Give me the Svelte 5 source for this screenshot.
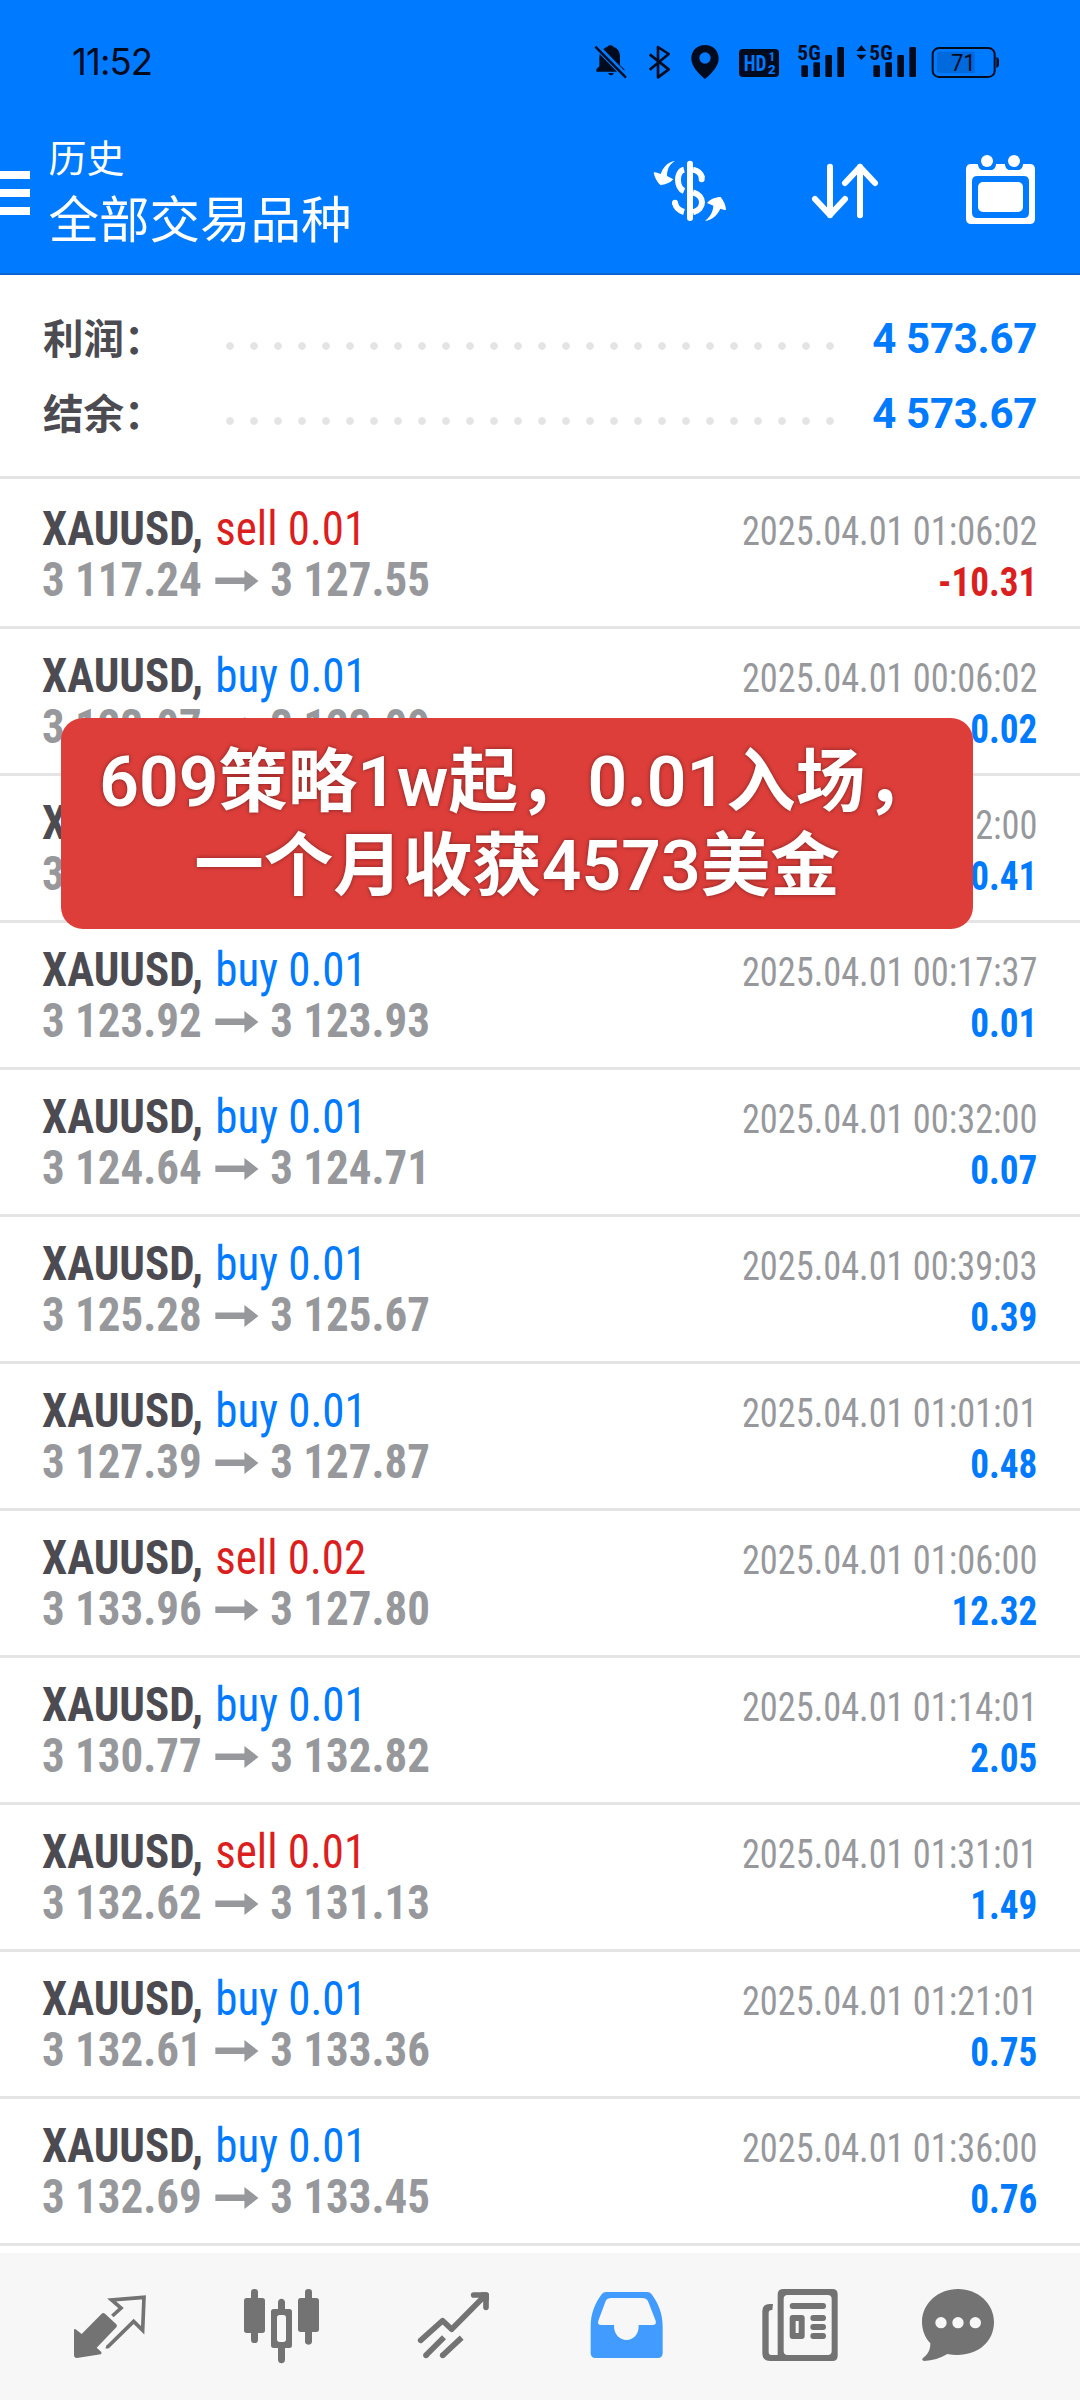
<script lang="ts">
  type Deal = {
    side: "buy" | "sell";
    volume: string;
    open: string;
    close: string;
    time: string;
    profit: string;
  };

  const summary = [
    { label: "利润：", value: "4 573.67" },
    { label: "结余：", value: "4 573.67" },
  ];

  const deals: Deal[] = [
    { side: "sell", volume: "0.01", open: "3 117.24", close: "3 127.55", time: "2025.04.01 01:06:02", profit: "-10.31" },
    { side: "buy", volume: "0.01", open: "3 123.07", close: "3 123.09", time: "2025.04.01 00:06:02", profit: "0.02" },
    { side: "buy", volume: "0.01", open: "3 123.50", close: "3 123.91", time: "2025.04.01 00:12:00", profit: "0.41" },
    { side: "buy", volume: "0.01", open: "3 123.92", close: "3 123.93", time: "2025.04.01 00:17:37", profit: "0.01" },
    { side: "buy", volume: "0.01", open: "3 124.64", close: "3 124.71", time: "2025.04.01 00:32:00", profit: "0.07" },
    { side: "buy", volume: "0.01", open: "3 125.28", close: "3 125.67", time: "2025.04.01 00:39:03", profit: "0.39" },
    { side: "buy", volume: "0.01", open: "3 127.39", close: "3 127.87", time: "2025.04.01 01:01:01", profit: "0.48" },
    { side: "sell", volume: "0.02", open: "3 133.96", close: "3 127.80", time: "2025.04.01 01:06:00", profit: "12.32" },
    { side: "buy", volume: "0.01", open: "3 130.77", close: "3 132.82", time: "2025.04.01 01:14:01", profit: "2.05" },
    { side: "sell", volume: "0.01", open: "3 132.62", close: "3 131.13", time: "2025.04.01 01:31:01", profit: "1.49" },
    { side: "buy", volume: "0.01", open: "3 132.61", close: "3 133.36", time: "2025.04.01 01:21:01", profit: "0.75" },
    { side: "buy", volume: "0.01", open: "3 132.69", close: "3 133.45", time: "2025.04.01 01:36:00", profit: "0.76" },
  ];
</script>

<div class="screen">
  <header>
    <div class="status">
      <span class="clock">11:52</span>
      <div class="status-icons">
        <svg class="bell" viewBox="102 69 102 114">
          <path d="M109 155v-7l9-9v-25c0-17 10-29 24-33 1-7 17-7 19 0 12 4 19 14 19 29v26l13 12v7z" />
          <path d="M145 159h16c-1 9-15 9-16 0z" />
          <path d="M107 77l93 95" stroke="#007aff" stroke-width="18" fill="none" />
          <path d="M106 80l92 93" stroke="#000c1e" stroke-width="7" fill="none" />
        </svg>
        <svg class="bt" viewBox="264 69 69 114">
          <path d="M269 103l57 45-32 24V81l32 21-57 47" fill="none" stroke="#000c1e" stroke-width="8" stroke-linejoin="round" />
        </svg>
        <svg class="pin" viewBox="390 69 90 114">
          <path fill-rule="evenodd" d="M435 75c24 0 41 17 41 41 0 22-22 45-41 61-19-16-41-39-41-61 0-24 17-41 41-41zm0 22a17 17 0 1 0 0 34 17 17 0 0 0 0-34z" />
        </svg>
        <svg class="hd" viewBox="534 69 126 114">
          <rect x="537" y="87" width="120" height="84" rx="12" />
          <text x="551" y="152" font-size="65" textLength="68" lengthAdjust="spacingAndGlyphs">HD</text>
          <text x="626" y="123" font-size="36" textLength="19" lengthAdjust="spacingAndGlyphs">1</text>
          <text x="623" y="161" font-size="40" textLength="24" lengthAdjust="spacingAndGlyphs">2</text>
        </svg>
        <svg class="sig1" viewBox="711 69 144 114">
          <text x="712" y="119" font-size="58" textLength="70" lengthAdjust="spacingAndGlyphs">5G</text>
          <rect x="724" y="136" width="20" height="35" rx="4" />
          <rect x="760" y="127" width="20" height="44" rx="4" />
          <rect x="796" y="105" width="20" height="66" rx="4" />
          <rect x="832" y="81" width="20" height="90" rx="4" />
        </svg>
        <svg class="sig2" viewBox="885 69 186 114">
          <path d="M889 93l15-17 15 17zM889 104h30l-15 16z" />
          <text x="928" y="119" font-size="58" textLength="70" lengthAdjust="spacingAndGlyphs">5G</text>
          <rect x="940" y="136" width="20" height="35" rx="4" />
          <rect x="976" y="127" width="20" height="44" rx="4" />
          <rect x="1012" y="105" width="20" height="66" rx="4" />
          <rect x="1048" y="81" width="20" height="90" rx="4" />
        </svg>
        <svg class="battery" viewBox="1113 69 207 114">
          <rect x="1118" y="84" width="186" height="87" rx="19" fill="none" stroke="#000c1e" stroke-width="6" />
          <path d="M1140 95h104v64h-104q-9 0-9-9v-46q0-9 9-9z" fill="#0069dc" />
          <path d="M1309 111q8 2 8 8v16q0 6-8 9z" />
          <text x="1173" y="153" font-size="72" textLength="74" lengthAdjust="spacingAndGlyphs">71</text>
        </svg>
      </div>
    </div>

    <div class="toolbar">
      <div class="menu"><i></i><i></i><i></i></div>
      <div class="titles">
        <span class="sub">历史</span>
        <span class="title">全部交易品种</span>
      </div>
      <div class="actions">
        <svg viewBox="270 390 240 240">
          <path d="M390 431v163" stroke-width="18" stroke-linecap="round" />
          <path d="M372 449c-24 6-24 54 0 64M345 548c2 14 13 24 27 28M399 449c14 3 24 10 27 24M399 517c36 10 36 50 0 60" stroke-width="18" />
          <path d="M345 548v1M425 472v6" stroke-width="18" stroke-linecap="round" />
          <path fill="#fff" stroke="none" d="M345 423c-16 10-24 24-24 45l19 10c-10 11-23 16-39 17-10-10-17-22-20-37 4-3 8 0 21 4 6-18 21-37 43-39zM435 603c14-12 24-26 25-46l-19-8c9-11 26-18 41-18 9 12 15 23 16 38-4 3-8-1-17-3-8 18-23 33-46 37z" />
        </svg>
        <svg viewBox="738 390 240 240">
          <path d="M813 440v146M768 537l45 48 45-48M903 586V440M858 489l45-48 45 48" stroke-width="18" stroke-linecap="round" stroke-linejoin="round" />
        </svg>
        <svg viewBox="1200 390 240 240">
          <g fill="#fff" stroke="none">
            <circle cx="1281" cy="423" r="18" />
            <circle cx="1362" cy="423" r="18" />
            <path fill-rule="evenodd" d="M1234 432h20c0 10 6 18 15 18h24c9 0 15-8 15-18h27c0 10 6 18 15 18h24c9 0 15-8 15-18h20q16 0 16 16v148q0 16-16 16h-175q-16 0-16-16V448q0-16 16-16zm18 36q-16 0-16 16v94q0 16 16 16h139q16 0 16-16v-94q0-16-16-16z" />
            <rect x="1254" y="486" width="135" height="90" rx="15" />
          </g>
        </svg>
      </div>
    </div>
  </header>

  <section class="summary">
    {#each summary as s}
      <div class="sum-row">
        <span class="sum-label">{s.label}</span>
        <span class="dots"></span>
        <span class="sum-value">{s.value}</span>
      </div>
    {/each}
  </section>

  <main>
    {#each deals as d}
      <div class="deal">
        <div class="left">
          <div class="line"><b>XAUUSD,</b> <span class="side {d.side}">{d.side} {d.volume}</span></div>
          <div class="line prices">
            <span>{d.open}</span>
            <svg viewBox="0 0 43 22" preserveAspectRatio="none"><path d="M0 7.5h29V0l14 11-14 11v-8H0z" /></svg>
            <span>{d.close}</span>
          </div>
        </div>
        <div class="right">
          <div class="time">{d.time}</div>
          <div class="profit" class:loss={d.profit.startsWith("-")}>{d.profit}</div>
        </div>
      </div>
    {/each}
  </main>

  <nav>
    <svg viewBox="30 48 240 240">
      <path d="M42 179q1-4 5-1l18 14 60-61q5-4 10 0l34 32q4 5 0 9l-59 61 14 13q2 5-2 7l-71 11q-9 0-9-9z" />
      <path d="M157 138l26-24-28-24 97-8-4 99-27-27-76 75q-4 2-7 1" fill="none" stroke="#737373" stroke-width="11" />
    </svg>
    <svg viewBox="546 48 240 240">
      <rect x="552" y="84" width="63" height="105" rx="8" />
      <rect x="573" y="57" width="21" height="162" rx="10" />
      <rect x="714" y="84" width="63" height="102" rx="8" />
      <rect x="735" y="57" width="21" height="167" rx="10" />
      <path fill-rule="evenodd" d="M641 117h13V97c0-14 21-14 21 0v20h13q8 0 8 8v101q0 8-8 8h-13v35c0 14-21 14-21 0v-35h-13q-8 0-8-8V125q0-8 8-8zm18 18q-8 0-8 8v65q0 8 8 8h11q8 0 8-8v-65q0-8-8-8z" />
    </svg>
    <svg viewBox="1062 48 240 240">
      <g fill="none" stroke="#737373" stroke-width="17" stroke-linejoin="round">
        <path d="M1082 211l66-59 27 26 98-99M1241 75h37v37" stroke-linecap="round" />
        <path d="M1152 202l-54 54M1205 203l-57 53" />
      </g>
      <circle cx="1098" cy="256" r="8.5" />
      <circle cx="1148" cy="256" r="8.5" />
      <path d="M1262 67h17q8 0 8 8v18z" />
    </svg>
    <svg class="active" viewBox="51 48 240 240">
      <path fill-rule="evenodd" d="M109 66h122q9 0 14 7c20 27 33 58 33 97v79q0 15-15 15H77q-15 0-15-15v-79c0-39 13-70 33-97q5-7 14-7zm15 18q-13 0-17 9L85 152q-4 13 9 13h38c-2 59 77 60 74 0h42q12 0 9-13l-22-56q-4-12-19-12z" />
    </svg>
    <svg viewBox="570 48 240 240">
      <path fill-rule="evenodd" d="M641 57h146q16 0 16 16v184q0 16-16 16H600q-23 0-23-23V124q0-22 22-22h10l-2 18q-11-1-11 9v117q0 9 8 9h19V73q0-16 18-16zm12 18q-12 0-12 12v156q0 12 12 12h120q12 0 12-12V87q0-12-12-12z" />
      <rect x="659" y="99" width="109" height="18" rx="9" />
      <path fill-rule="evenodd" d="M668 135h27q9 0 9 9v54q0 9-9 9h-27q-9 0-9-9v-54q0-9 9-9zm9 18v36h9v-36z" />
      <rect x="721" y="135" width="47" height="18" rx="9" />
      <rect x="721" y="162" width="47" height="18" rx="9" />
      <rect x="721" y="189" width="47" height="18" rx="9" />
    </svg>
    <svg viewBox="1044 48 240 240">
      <path d="M1164 57c60 0 108 44 108 99 0 68-62 110-140 96-20 13-45 20-69 21q-10-2-4-9c16-12 22-24 22-44-17-19-25-40-25-64 0-55 48-99 108-99z" />
      <g fill="#f7f7f7">
        <circle cx="1113" cy="158" r="17" />
        <circle cx="1164" cy="158" r="17" />
        <circle cx="1216" cy="158" r="17" />
      </g>
    </svg>
  </nav>

  <div class="banner">609策略1w起，0.01入场，<br />一个月收获4573美金</div>
</div>

<style>
  :global(body) { background: #fff; }
  .screen {
    position: relative; width: 1080px; height: 2400px; overflow: hidden;
    display: flex; flex-direction: column; background: #fff;
    font-family: "Roboto", "Noto Sans CJK SC", sans-serif;
  }
  svg { display: block; flex-shrink: 0; overflow: visible; }

  header {
    height: 275px; box-sizing: border-box; color: #fff;
    background: #007aff; border-bottom: 2px solid #0a66cc;
  }
  .status { display: flex; justify-content: space-between; height: 125px; padding: 0 80px 0 72px; }
  .clock {
    font-family: "Inter", sans-serif; font-size: 36.5px; line-height: 44px;
    letter-spacing: -0.9px; color: #000c1e; margin-top: 40px;
  }
  .status-icons { display: flex; margin-top: 43px; }
  .status-icons svg { height: 38px; fill: #000c1e; }
  .status-icons text { font-family: "Roboto Condensed", "Roboto", sans-serif; font-weight: 700; }
  .bell { width: 34px; }
  .bt { width: 23px; margin-left: 20px; }
  .pin { width: 30px; margin-left: 19px; }
  .hd { width: 42px; margin-left: 18px; }
  .status-icons .hd text { fill: #007aff; }
  .sig1 { width: 48px; margin-left: 17px; }
  .sig2 { width: 62px; margin-left: 10px; }
  .battery { width: 69px; margin-left: 14px; }
  .status-icons .battery text { font-family: "Roboto", sans-serif; font-weight: 400; }

  .toolbar { display: flex; height: 148px; }
  .menu { display: flex; flex-direction: column; gap: 10px; width: 30px; padding-top: 46px; }
  .menu i { height: 8px; background: #fff; }
  .titles {
    display: flex; flex-direction: column; margin-left: 18.5px; flex: 1;
    font-family: "Noto Sans CJK SC", sans-serif;
  }
  .sub { font-size: 38px; line-height: 50px; margin-top: 6px; }
  .title { font-size: 50.5px; line-height: 64px; margin-top: 3px; }
  .actions { display: flex; gap: 75px; margin: 25px 40px 0 0; }
  .actions svg { width: 80px; height: 80px; fill: none; stroke: #fff; }

  .summary { height: 204px; box-sizing: border-box; padding: 26px 43px 0; border-bottom: 3px solid #e4e4e4; }
  .sum-row { display: flex; height: 75px; line-height: 75px; }
  .sum-label {
    width: 175px; font-family: "Noto Sans CJK SC", sans-serif;
    font-size: 40.5px; font-weight: 700; line-height: 71px; color: #4c4b52;
  }
  .dots {
    width: 624px; height: 24px; margin-top: 33px;
    background: radial-gradient(circle, #e4e4e4 3.4px, transparent 4.2px) 0 0 / 24px 24px;
  }
  .sum-value {
    flex: 1; text-align: right; font-size: 42px; font-weight: 700;
    letter-spacing: -0.3px; color: #007aff; white-space: nowrap;
  }

  main { height: 1774px; }
  .deal {
    display: flex; justify-content: space-between; height: 147px; box-sizing: border-box;
    padding: 21px 42.5px 0 42px; border-bottom: 3px solid #e4e4e4;
    font-family: "Roboto Condensed", "Roboto", sans-serif; white-space: nowrap;
  }
  .deal:first-child { height: 150px; padding-top: 24px; }
  /* the list face is a touch narrower than Roboto Condensed */
  .left { transform: scaleX(0.937); transform-origin: 0 0; }
  .line { font-size: 48px; line-height: 51px; height: 51px; }
  .line b { color: #4c4b52; }
  .side { margin-left: 2px; color: #007aff; }
  .side.sell { color: #db1f1f; }
  .prices { display: flex; font-weight: 700; color: #97989c; }
  .prices svg { width: 46px; height: 22px; margin: 16px 13px 0 14px; fill: #97989c; }
  .right { padding-top: 3px; text-align: right; font-size: 40px; line-height: 51px; }
  .time { transform: scaleX(0.908); transform-origin: 100% 0; color: #97989c; }
  .profit { transform: scaleX(0.93); transform-origin: 100% 0; font-weight: 700; color: #007aff; }
  .profit.loss { color: #db1f1f; }

  nav {
    display: grid; grid-template-columns: 172px 172px 173px 173px 158px 80px;
    height: 147px; box-sizing: border-box; padding: 33px 0 0 70px; background: #f7f7f7;
  }
  nav svg { width: 80px; height: 80px; fill: #737373; }
  nav .active { fill: #429bff; }

  /* promo caption floating over the list */
  .banner {
    position: absolute; left: 61px; top: 718px; width: 912px; height: 211px;
    box-sizing: border-box; padding-top: 23px; border-radius: 22px;
    background: #dd3e3a; color: #fff; text-align: center; white-space: nowrap;
    font-size: 69.5px; font-weight: 600; line-height: 83.5px;
    text-shadow: 0 0 4px rgba(0,0,0,0.45);
  }
</style>
